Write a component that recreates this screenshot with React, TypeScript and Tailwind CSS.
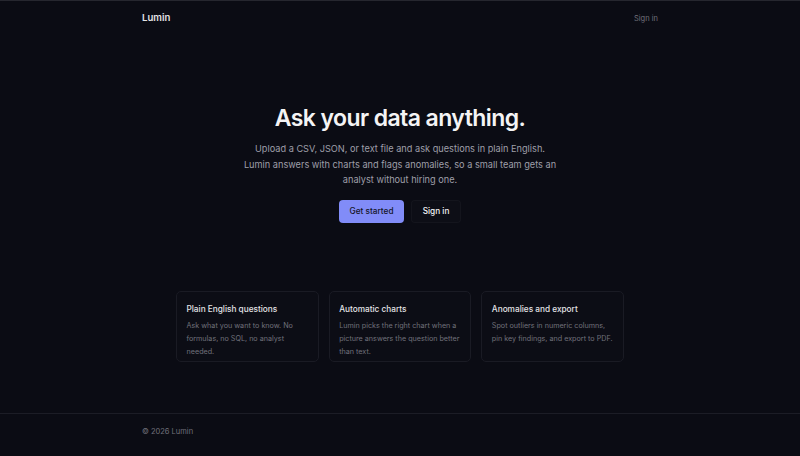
import React from 'react';

const FEATURES = [
  {
    title: 'Plain English questions',
    body: 'Ask what you want to know. No formulas, no SQL, no analyst needed.',
  },
  {
    title: 'Automatic charts',
    body: 'Lumin picks the right chart when a picture answers the question better than text.',
  },
  {
    title: 'Anomalies and export',
    body: 'Spot outliers in numeric columns, pin key findings, and export to PDF.',
  },
];

export default function App() {
  return (
    <div
      className="min-h-screen flex flex-col bg-[#0b0c14] text-zinc-100 border-t border-[#26272f]"
      style={{ fontFamily: 'Inter, "Noto Sans", sans-serif' }}
    >
      {/* Header */}
      <header className="h-[35px] px-[142px] flex items-center justify-between">
        <span className="text-[9.6px] font-semibold text-zinc-200">Lumin</span>
        <a className="text-[7.5px] text-zinc-500">Sign in</a>
      </header>

      {/* Hero */}
      <main className="flex-1 flex flex-col items-center">
        <section className="pt-[67px] flex flex-col items-center text-center">
          <h1 className="text-[23px] leading-[30px] font-semibold tracking-tight text-zinc-100">
            Ask your data anything.
          </h1>
          <p className="mt-[8px] max-w-[316px] text-[9.2px] leading-[15.5px] text-zinc-400">
            Upload a CSV, JSON, or text file and ask questions in plain English. Lumin answers with charts and
            flags anomalies, so a small team gets an analyst without hiring one.
          </p>
          <div className="mt-[12px] flex items-center gap-[7px]">
            <button className="h-[23px] w-[65px] rounded-[4px] bg-[#818cf8] text-[8.25px] font-medium text-[#141526]">
              Get started
            </button>
            <button className="h-[23px] w-[50px] rounded-[4px] border border-white/[0.03] bg-[#0d0e16] text-[8.25px] font-medium text-zinc-100">
              Sign in
            </button>
          </div>
        </section>

        {/* Features */}
        <section className="mt-[68px] grid grid-cols-3 gap-[10px] w-[448px]">
          {FEATURES.map((f) => (
            <div
              key={f.title}
              className="h-[71px] rounded-[5px] border border-[#1a1b24] bg-[#0c0d15] px-[9.5px] pt-[12px]"
            >
              <h3 className="text-[8.25px] leading-[11px] font-medium text-zinc-200">{f.title}</h3>
              <p className="mt-[4px] text-[7.2px] leading-[13px] text-zinc-500">{f.body}</p>
            </div>
          ))}
        </section>
      </main>

      {/* Footer */}
      <footer className="h-[43px] border-t border-[#1c1d26] px-[142px] pb-[6px] flex items-center">
        <span className="text-[7.5px] leading-[10px] text-zinc-500">© 2026 Lumin</span>
      </footer>
    </div>
  );
}
